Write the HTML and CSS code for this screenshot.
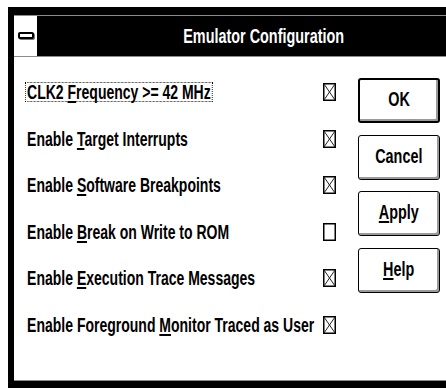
FILE: index.html
```html
<!DOCTYPE html>
<html lang="en">
<head>
    <meta charset="UTF-8">
    <title>Emulator Configuration</title>
    <link rel="stylesheet" href="styles.css">
</head>
<body>
    <div class="window">
        <div class="title-row">
            <div class="sys-menu"><span class="sys-bar"></span></div>
            <div class="caption"><span class="txt">Emulator Configuration</span></div>
        </div>
        <div class="client">
            <div class="options">
                <div class="option">
                    <span class="label focus">CLK2 <u>F</u>requency &gt;= 42 MHz</span>
                    <svg class="check" width="13" height="18" viewBox="0 0 13 18"><rect x="0.75" y="0.75" width="11.5" height="16.5"/><path d="M1 1L12 17M12 1L1 17"/></svg>
                </div>
                <div class="option">
                    <span class="label">Enable <u>T</u>arget Interrupts</span>
                    <svg class="check" width="13" height="18" viewBox="0 0 13 18"><rect x="0.75" y="0.75" width="11.5" height="16.5"/><path d="M1 1L12 17M12 1L1 17"/></svg>
                </div>
                <div class="option">
                    <span class="label">Enable <u>S</u>oftware Breakpoints</span>
                    <svg class="check" width="13" height="18" viewBox="0 0 13 18"><rect x="0.75" y="0.75" width="11.5" height="16.5"/><path d="M1 1L12 17M12 1L1 17"/></svg>
                </div>
                <div class="option">
                    <span class="label">Enable <u>B</u>reak on Write to ROM</span>
                    <svg class="check" width="13" height="18" viewBox="0 0 13 18"><rect x="0.75" y="0.75" width="11.5" height="16.5"/></svg>
                </div>
                <div class="option">
                    <span class="label">Enable <u>E</u>xecution Trace Messages</span>
                    <svg class="check" width="13" height="18" viewBox="0 0 13 18"><rect x="0.75" y="0.75" width="11.5" height="16.5"/><path d="M1 1L12 17M12 1L1 17"/></svg>
                </div>
                <div class="option">
                    <span class="label">Enable Foreground <u>M</u>onitor Traced as User</span>
                    <svg class="check" width="13" height="18" viewBox="0 0 13 18"><rect x="0.75" y="0.75" width="11.5" height="16.5"/><path d="M1 1L12 17M12 1L1 17"/></svg>
                </div>
            </div>
            <div class="buttons">
                <button class="btn default" type="button"><span class="txt">OK</span></button>
                <button class="btn" type="button"><span class="txt">Cancel</span></button>
                <button class="btn" type="button"><span class="txt"><u>A</u>pply</span></button>
                <button class="btn" type="button"><span class="txt"><u>H</u>elp</span></button>
            </div>
        </div>
    </div>
</body>
</html>
```

FILE: styles.css
```css
body {
  margin: 0;
  background: #fff;
  overflow: hidden;
  font-family: "Liberation Sans", Arial, sans-serif;
  font-size: 20px;
  font-weight: bold;
  color: #000;
}
.window {
  width: 476px;
  margin: 7px 0 0 8px;
  padding: 8px 6px 7px;
  background: #000;
}
.title-row {
  display: flex;
  height: 40px;
  border-top: 1px solid #8c8c8c;
  border-bottom: 1px solid #8c8c8c;
}
.sys-menu {
  display: flex;
  width: 23px;
  margin-right: 1px;
  align-items: center;
  justify-content: center;
  background: #fff;
}
.sys-bar {
  width: 12px;
  height: 3px;
  margin-top: -2px;
  border: 2px solid #000;
  border-radius: 2px;
  background: #fff;
  box-shadow: 1px 1px 0 #777;
}
.caption {
  display: flex;
  flex: 1;
  align-items: center;
  justify-content: center;
  color: #fff;
}
/* the dialog font is a narrow system face: squeeze a regular one */
.txt {
  display: inline-block;
  transform: scaleX(0.72);
  white-space: nowrap;
}
.client {
  display: flex;
  height: 323px;
  border-bottom: 1px solid #8c8c8c;
  background: #fff;
}
.options {
  padding: 25px 0 0 11px;
}
.option {
  display: grid;
  grid-template-columns: minmax(0, 1fr) 13px;
  width: 311px;
  height: 20px;
  margin-bottom: 26.6px;
  align-items: center;
}
.label {
  display: inline-block;
  box-sizing: border-box;
  height: 20px;
  padding: 0 2px;
  border: 1px dotted transparent;
  line-height: 18px;
  white-space: nowrap;
  justify-self: start;
  transform: scaleX(0.7);
  transform-origin: left center;
}
.label.focus {
  border-color: #000;
}
u {
  text-decoration-thickness: 2px;
  text-underline-offset: 2px;
}
.check {
  display: block;
}
.check rect {
  fill: #fff;
  stroke: #000;
  stroke-width: 1.5;
}
.check path {
  fill: none;
  stroke: #222;
  stroke-width: 1;
}
.buttons {
  display: flex;
  flex-direction: column;
  gap: 11.5px;
  padding: 21px 0 0 22px;
}
.btn {
  box-sizing: border-box;
  width: 82px;
  height: 45px;
  padding: 0 0 2px;
  border: 1px solid #000;
  border-radius: 3px;
  background: #fff;
  box-shadow: inset -2px -2px 0 #9a9a9a;
  color: #000;
  font: inherit;
}
.btn.default {
  border-width: 2px;
}
```
